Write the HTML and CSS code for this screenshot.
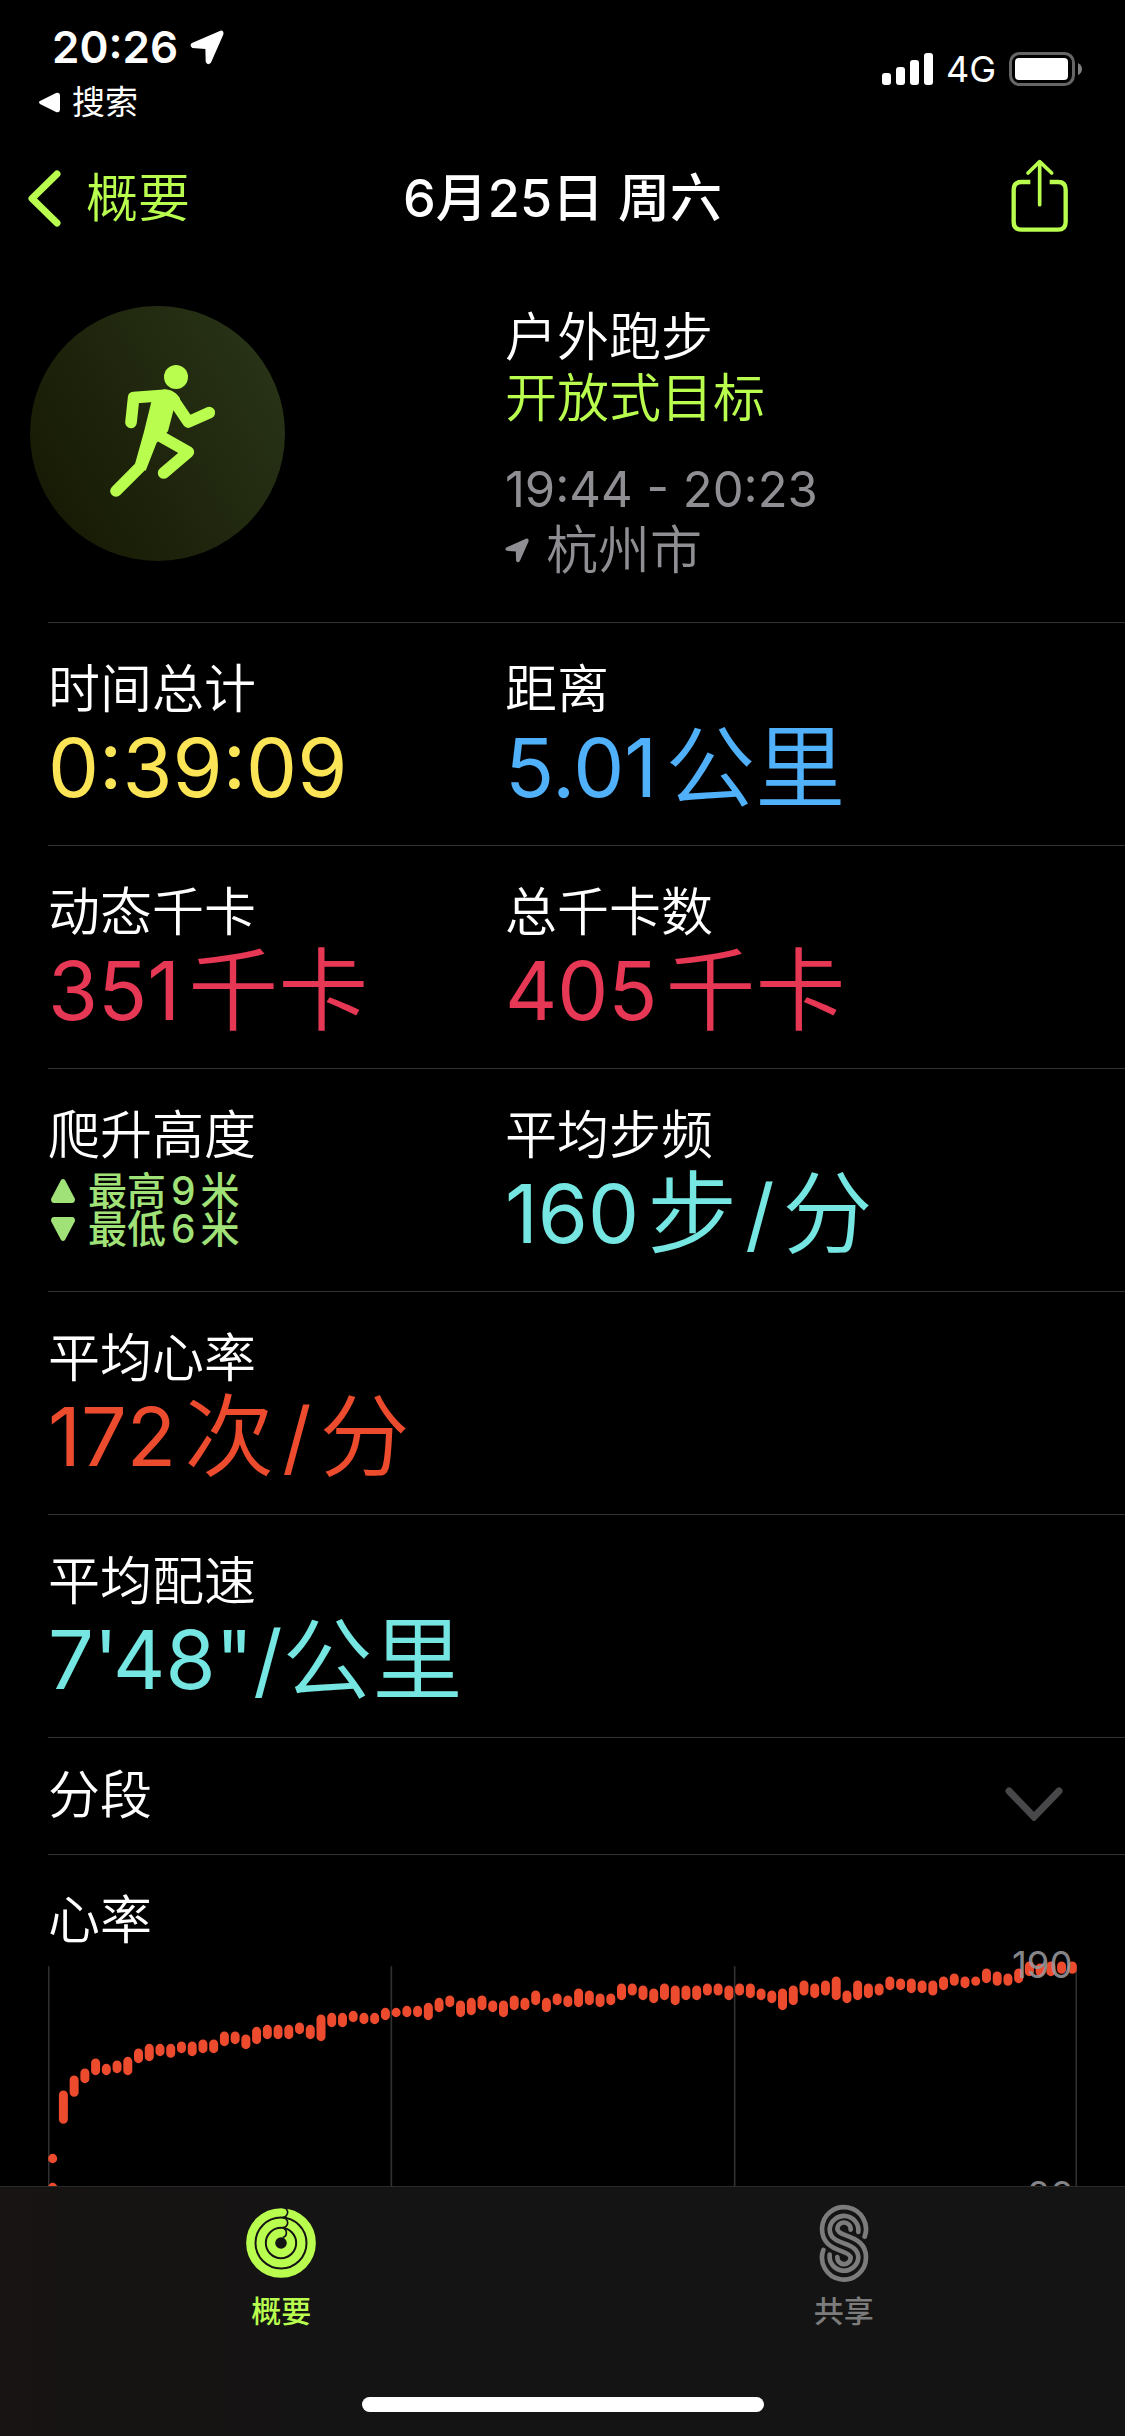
FILE: index.html
```html
<!DOCTYPE html>
<html lang="zh-CN">

<head>
    <meta charset="UTF-8">
    <meta name="viewport" content="width=device-width, initial-scale=1.0">
    <title>6月25日 周六</title>
    <link rel="stylesheet" href="styles.css">
</head>

<body>
    <header>
        <div class="status">
            <div class="status-left">
                <div class="clock">
                    <span>20:26</span>
                    <svg width="34" height="35" viewBox="510 61 104 105"><path fill="currentColor" d="M603 62L516 100Q507 107 517 115L557 118L558 158Q564 170 574 160L612 74Q614 60 603 62Z"/></svg>
                </div>
                <a class="back-app" href="#">
                    <svg width="21" height="21" viewBox="0 0 21 21"><path fill="currentColor" d="M1 9L17 1Q21 0 21 4V17Q21 21 17 20L1 12Q-1 10 1 9Z"/></svg>
                    <span>搜索</span>
                </a>
            </div>
            <div class="status-right">
                <svg width="51" height="32" viewBox="0 0 51 32" fill="currentColor">
                    <rect x="0" y="20" width="9" height="12" rx="3"/>
                    <rect x="14" y="14" width="9" height="18" rx="3"/>
                    <rect x="28" y="7" width="9" height="25" rx="3"/>
                    <rect x="42" y="0" width="9" height="32" rx="3"/>
                </svg>
                <span>4G</span>
                <svg width="74" height="34" viewBox="0 0 74 34">
                    <rect x="1.5" y="1.5" width="63" height="31" rx="9" fill="none" stroke="#666" stroke-width="3"/>
                    <rect x="6" y="6" width="53" height="22" rx="4" fill="#fff"/>
                    <path fill="#808080" d="M69 11Q73 13 73 17T69 23Z"/>
                </svg>
            </div>
        </div>
        <nav class="nav">
            <a class="nav-back" href="#">
                <svg width="33" height="57" viewBox="0 0 33 57"><path d="M29 4L4 28.500L29 53" fill="none" stroke="currentColor" stroke-width="7" stroke-linecap="round" stroke-linejoin="round"/></svg>
                <span>概要</span>
            </a>
            <h1>6月25日 周六</h1>
            <button class="share" type="button" aria-label="共享">
                <svg width="58" height="73" viewBox="439 388 174 219" fill="none" stroke="currentColor" stroke-width="13">
                    <path d="M497 457H470Q447 457 447 480V577Q447 600 470 600H580Q603 600 603 577V480Q603 457 580 457H555"/>
                    <path d="M525 398V525M490 430L525 396L561 430" stroke-width="11" stroke-linecap="round" stroke-linejoin="round"/>
                </svg>
            </button>
        </nav>
    </header>

    <main>
        <section class="row hero">
            <div class="badge">
                <svg viewBox="30 48 765 765" fill="currentColor">
                    <circle cx="468" cy="261" r="36"/>
                    <path d="M394 335L432 298C456 298 470 310 480 325L460 362L444 424L410 458L377 542L345 522L372 425Z"/>
                    <g fill="none" stroke="currentColor" stroke-width="35" stroke-linecap="round" stroke-linejoin="round">
                        <path d="M333 397L341 323L432 316"/>
                        <path d="M440 318Q457 322 466 338L505 396L568 368"/>
                        <path d="M420 438L505 486L431 549"/>
                        <path d="M361 530L288 603"/>
                    </g>
                </svg>
            </div>
            <div class="info">
                <p>户外跑步</p>
                <p class="goal">开放式目标</p>
                <p class="time">19:44 - 20:23</p>
                <p class="place">
                    <svg width="24" height="25" viewBox="510 61 104 105"><path fill="currentColor" d="M603 62L516 100Q507 107 517 115L557 118L558 158Q564 170 574 160L612 74Q614 60 603 62Z"/></svg>
                    <span>杭州市</span>
                </p>
            </div>
        </section>

        <section class="row">
            <div class="cell">
                <p>时间总计</p>
                <p class="value yellow"><span>0:39:09</span></p>
            </div>
            <div class="cell">
                <p>距离</p>
                <p class="value blue"><span>5.01</span><span class="unit">公里</span></p>
            </div>
        </section>

        <section class="row">
            <div class="cell">
                <p>动态千卡</p>
                <p class="value red"><span>351</span><span class="unit">千卡</span></p>
            </div>
            <div class="cell">
                <p>总千卡数</p>
                <p class="value red"><span>405</span><span class="unit">千卡</span></p>
            </div>
        </section>

        <section class="row">
            <div class="cell">
                <p>爬升高度</p>
                <div class="climb">
                    <p>
                        <svg width="24" height="24" viewBox="0 0 24 24"><path fill="currentColor" d="M10 1Q12 -1 14 1L24 20Q24 24 21 24H3Q0 24 0 20Z"/></svg>
                        <span>最高</span><span>9</span><span>米</span>
                    </p>
                    <p>
                        <svg width="24" height="24" viewBox="0 0 24 24"><path fill="currentColor" d="M10 23Q12 25 14 23L24 4Q24 0 21 0H3Q0 0 0 4Z"/></svg>
                        <span>最低</span><span>6</span><span>米</span>
                    </p>
                </div>
            </div>
            <div class="cell">
                <p>平均步频</p>
                <p class="value cyan"><span>160</span><span class="unit">步</span><span>/</span><span class="unit">分</span></p>
            </div>
        </section>

        <section class="row">
            <div class="cell">
                <p>平均心率</p>
                <p class="value orange"><span>172</span><span class="unit">次</span><span>/</span><span class="unit">分</span></p>
            </div>
        </section>

        <section class="row">
            <div class="cell">
                <p>平均配速</p>
                <p class="value pace cyan"><span>7'48"/</span><span class="unit">公里</span></p>
            </div>
        </section>

        <button class="splits" type="button">
            <span>分段</span>
            <svg width="58" height="34" viewBox="0 0 58 34"><path d="M4 4L29 30L54 4" fill="none" stroke="currentColor" stroke-width="7" stroke-linecap="round"/></svg>
        </button>

        <section class="heart">
            <h2>心率</h2>
            <svg class="chart" viewBox="0 62 3087 840">
                <path class="grid" d="M2 108V915M1030 108V915M2060 108V915M3085 108V915"/>
                <path class="bars" id="bars"/>
                <text x="3074" y="144">190</text>
                <text x="3074" y="832">86</text>
            </svg>
        </section>
    </main>

    <footer>
        <nav class="tabs">
            <a class="tab active" href="#">
                <svg width="70" height="78" viewBox="140 72 210 234" fill="none">
                    <g stroke="currentColor" stroke-width="25">
                        <circle cx="245" cy="189" r="92"/>
                        <circle cx="245" cy="189" r="61"/>
                        <circle cx="245" cy="189" r="30"/>
                    </g>
                    <path d="M250 82A15 15 0 0 1 250 112M250 113A15 15 0 0 1 250 143M250 144A15 15 0 0 1 250 173" stroke="#141414" stroke-width="5"/>
                </svg>
                <span>概要</span>
            </a>
            <a class="tab" href="#">
                <svg width="50" height="78" viewBox="175 72 150 234" fill="none" stroke="currentColor" stroke-width="14" stroke-linecap="round">
                    <path d="M312 170A66 66 0 1 0 184 146C184 187 210 202 244 214Q270 223 270 234A20 20 0 1 1 230 231"/>
                    <path d="M293 156A43 43 0 1 0 207 146C207 172 224 181 250 190S293 209 293 234A43 43 0 1 1 207 224"/>
                    <path d="M270 149A20 20 0 1 0 230 146Q230 157 256 166C290 178 316 193 316 232A66 66 0 1 1 188 210"/>
                </svg>
                <span>共享</span>
            </a>
        </nav>
        <div class="home"></div>
    </footer>

    <script>
        // [top, bottom] of every heart rate range, in chart units
        const ranges = [
            [481, 580], [436, 499], [415, 458], [385, 434], [401, 434], [391, 428], [380, 434], [355, 398],
            [341, 392], [341, 377], [341, 382], [334, 368], [334, 377], [328, 368], [328, 368], [304, 347],
            [304, 341], [313, 356], [290, 341], [284, 326], [284, 326], [284, 326], [277, 311], [284, 326],
            [253, 332], [248, 290], [248, 290], [242, 275], [248, 281], [248, 281], [233, 269], [233, 260],
            [227, 260], [227, 260], [218, 269], [203, 245], [196, 230], [211, 260], [203, 254], [196, 239],
            [211, 245], [211, 260], [196, 239], [203, 239], [181, 224], [203, 245], [190, 224], [196, 230],
            [175, 230], [181, 224], [190, 230], [190, 224], [160, 209], [160, 195], [166, 209], [175, 218],
            [160, 209], [166, 224], [166, 209], [166, 209], [160, 195], [160, 195], [166, 209], [160, 195],
            [160, 203], [175, 209], [181, 218], [175, 239], [166, 224], [151, 195], [160, 203], [151, 195],
            [139, 209], [181, 218], [151, 209], [160, 203], [160, 195], [139, 179], [145, 179], [145, 188],
            [151, 188], [151, 195], [139, 179], [130, 166], [139, 173], [139, 166], [115, 158], [124, 166],
            [130, 166], [115, 158], [94, 137], [100, 137], [94, 137], [94, 130], [94, 130]
        ]
        const step = 32.2
        const radius = 13
        let d = 'M14 684v1M14 771v1'
        ranges.forEach(function (range, i) {
            d += 'M' + (14 + step * (i + 1)) + ' ' + (range[0] + radius) + 'V' + (range[1] - radius)
        })
        document.querySelector('#bars').setAttribute('d', d)
    </script>
</body>

</html>
```

FILE: styles.css
```css
* {
    box-sizing: border-box;
}
body {
    display: flex;
    flex-direction: column;
    height: 100vh;
    margin: 0;
    background-color: black;
    color: white;
    font-family: Inter, "Noto Sans CJK SC", sans-serif;
    font-size: 52px;
    font-weight: 350;
    line-height: 60px;
}
h1, h2, p {
    margin: 0;
    font-size: inherit;
    font-weight: inherit;
}
svg {
    display: block;
    flex: none;
}
a {
    color: inherit;
    text-decoration: none;
}
button {
    padding: 0;
    border: 0;
    background: none;
    color: inherit;
    font: inherit;
    cursor: pointer;
}

.status {
    display: flex;
    justify-content: space-between;
    height: 132px;
    padding: 23px 42px 0 39px;
}
.clock {
    display: flex;
    align-items: center;
    gap: 12px;
    padding-left: 13px;
    font-size: 44px;
    font-weight: 600;
    line-height: 48px;
}
.back-app {
    display: flex;
    align-items: center;
    gap: 12px;
    margin-top: 11px;
    font-size: 33px;
    font-weight: 400;
    line-height: 40px;
}
.status-right {
    display: flex;
    align-items: center;
    gap: 13px;
    height: 92px;
    font-size: 36px;
    font-weight: 400;
}

.nav {
    display: grid;
    grid-template-columns: 1fr auto 1fr;
    align-items: center;
    height: 132px;
    padding: 1px 56px 0 28px;
}
.nav-back {
    display: flex;
    align-items: center;
    gap: 25px;
    color: #b9fe4f;
}
.nav h1 {
    padding-left: 28px;
    font-weight: 500;
}
.share {
    justify-self: end;
    padding-bottom: 6px;
    color: #b9fe4f;
}

main {
    flex: 1;
    min-height: 0;
    padding-left: 48px;
    overflow: hidden;
}
.row {
    display: grid;
    grid-template-columns: 14fr 19fr;
    padding: 37px 0 29px;
    border-bottom: 1px solid #333;
}
.hero {
    padding: 42px 0 41px;
}
.badge {
    width: 255px;
    height: 255px;
    margin-left: -18px;
    border-radius: 50%;
    background: linear-gradient(60deg, #171a04 10%, #283317 90%);
    color: #b9fe4f;
}
.info {
    padding-top: 1px;
    line-height: 61px;
}
.goal {
    color: #b9fe4f;
}
.time, .place {
    color: #8e8e93;
}
.time {
    margin-top: 30px;
    font-size: 49px;
    font-weight: 400;
}
.place {
    display: flex;
    align-items: center;
    gap: 17px;
}

.value {
    display: flex;
    align-items: center;
    gap: 8px;
    font-size: 81px;
    font-weight: 400;
    line-height: 96px;
}
.pace {
    gap: 0;
}
.unit {
    font-size: 90px;
    font-weight: 350;
}
.yellow {
    color: #fbe557;
}
.blue {
    color: #50b0f9;
}
.red {
    color: #e63755;
}
.cyan {
    color: #75e6e1;
}
.orange {
    color: #ec4b2e;
}
.climb {
    padding-top: 6px;
    color: #a0e278;
    font-size: 39px;
    font-weight: 500;
    line-height: 38px;
}
.climb p {
    display: flex;
    align-items: center;
    gap: 5px;
}
.climb svg {
    margin: 0 8px 0 3px;
}

.splits {
    display: flex;
    justify-content: space-between;
    align-items: center;
    width: 100%;
    height: 117px;
    padding-right: 62px;
    border-bottom: 1px solid #333;
}
.splits svg {
    margin-top: 16px;
    color: #48484a;
}

.heart {
    padding: 36px 48px 0 0;
}
.chart {
    width: 100%;
}
.grid {
    fill: none;
    stroke: #303030;
    stroke-width: 5;
}
.bars {
    fill: none;
    stroke: #ec4b2e;
    stroke-width: 27;
    stroke-linecap: round;
}
.chart text {
    fill: #98989d;
    fill-opacity: .9;
    font-size: 110px;
    font-weight: 400;
    text-anchor: end;
}

footer {
    flex: none;
    padding-bottom: 24px;
    border-top: 1px solid #2a2a2a;
    background: linear-gradient(90deg, #171413, #141414 40%);
}
.tabs {
    display: flex;
    padding-top: 17px;
}
.tab {
    display: flex;
    flex: 1;
    flex-direction: column;
    align-items: center;
    gap: 11px;
    color: #7c7c7c;
    font-size: 30px;
    font-weight: 500;
    line-height: 36px;
}
.tab.active {
    color: #b9fe4f;
}
.home {
    width: 402px;
    height: 15px;
    margin: 68px auto 0;
    border-radius: 8px;
    background-color: white;
}
```
